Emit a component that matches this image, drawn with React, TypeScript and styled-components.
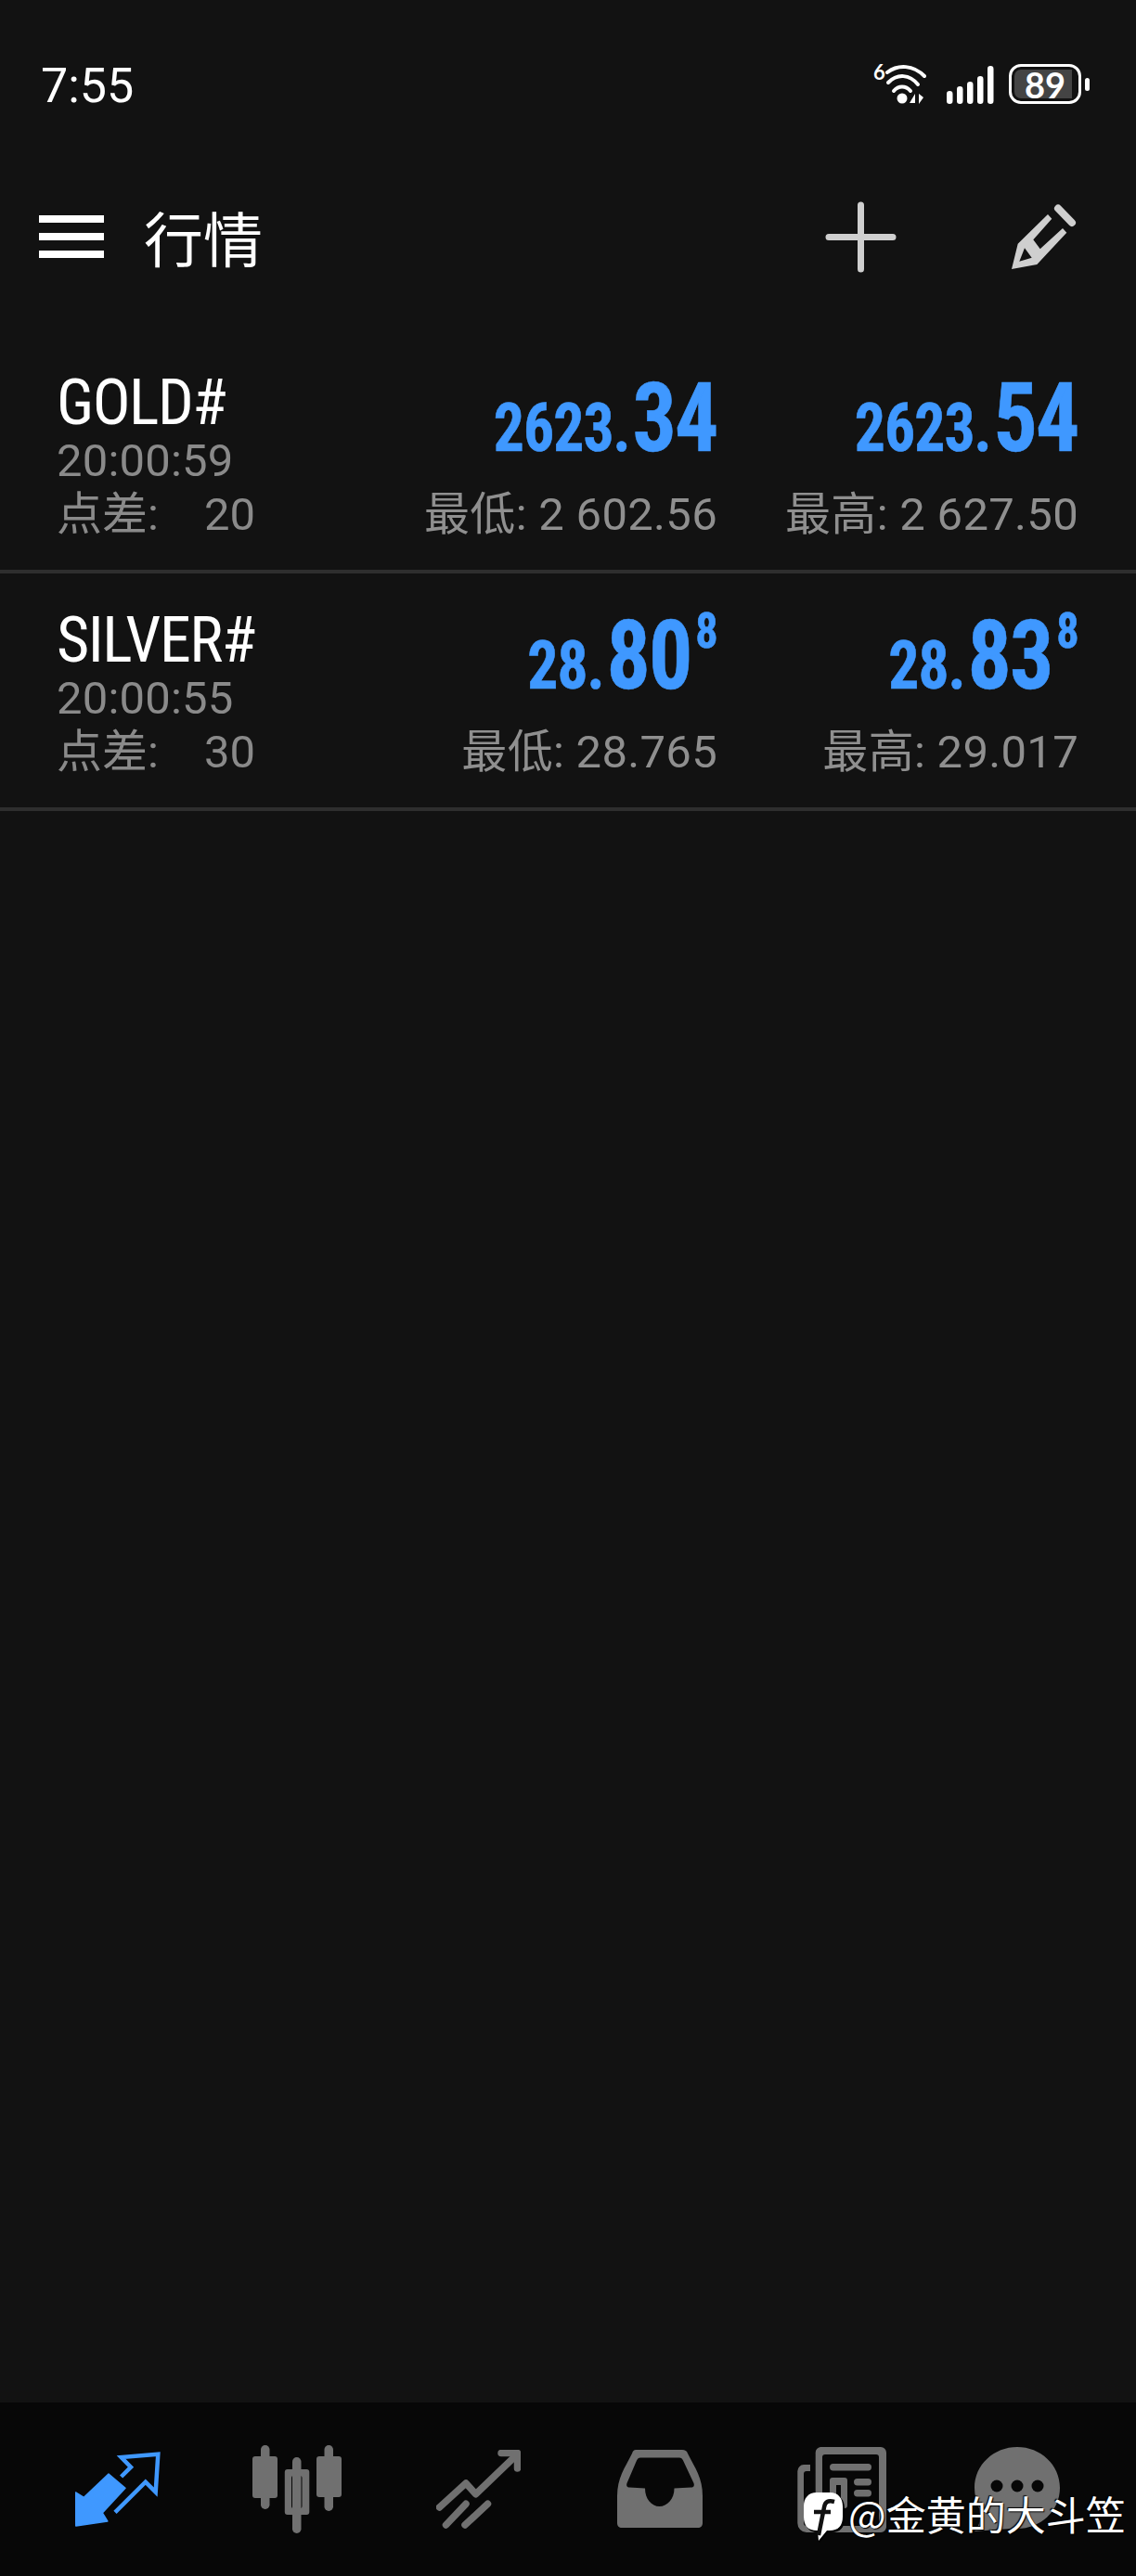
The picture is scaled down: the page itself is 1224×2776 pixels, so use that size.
import styled, { createGlobalStyle } from "styled-components";

type QuoteType = {
  head: string
  big: string
  sup?: string
  label: string
  value: string
}

type SymbolType = {
  name: string
  time: string
  spread: string
  bid: QuoteType
  ask: QuoteType
}

const symbols: SymbolType[] = [
  {
    name: "GOLD#",
    time: "20:00:59",
    spread: "20",
    bid: { head: "2623.", big: "34", label: "最低", value: "2 602.56" },
    ask: { head: "2623.", big: "54", label: "最高", value: "2 627.50" },
  },
  {
    name: "SILVER#",
    time: "20:00:55",
    spread: "30",
    bid: { head: "28.", big: "80", sup: "8", label: "最低", value: "28.765" },
    ask: { head: "28.", big: "83", sup: "8", label: "最高", value: "29.017" },
  },
]

const GlobalStyle = createGlobalStyle`
  html, body {
    margin: 0;
    padding: 0;
    background: #121212;
  }
`

const Page = styled.div`
  position: relative;
  display: flex;
  flex-direction: column;
  width: 1224px;
  height: 2776px;
  overflow: hidden;
  background: #121212;
  color: #fff;
  font-family: Roboto, "Noto Sans CJK SC", sans-serif;
`

const StatusBar = styled.div`
  display: flex;
  justify-content: space-between;
  height: 170px;
  box-sizing: border-box;
  padding: 61px 59px 0 44px;
`

const Clock = styled.span`
  font-size: 52px;
  line-height: 64px;
`

const StatusIcons = styled.div`
  display: flex;
  align-items: flex-start;
  height: 46px;
  margin-top: 8px;
`

const WifiSix = styled.span`
  width: 13px;
  margin-top: -2px;
  font-family: Lato, sans-serif;
  font-size: 22px;
  font-weight: 700;
  line-height: 22px;
`

const WifiIcon = styled.svg`
  display: block;
  margin-top: 1px;
`

const SignalIcon = styled.svg`
  display: block;
  margin-left: 22px;
  margin-top: 2px;
`

const Battery = styled.div`
  position: relative;
  display: flex;
  width: 78px;
  height: 43px;
  margin-left: 16px;
  box-sizing: border-box;
  border: 3px solid #fff;
  border-radius: 13px;
  padding: 3px;
  &::after {
    content: "";
    position: absolute;
    left: 79px;
    top: 12px;
    width: 5px;
    height: 14px;
    border-radius: 3px;
    background: #fff;
  }
`

const BatteryFill = styled.div`
  display: flex;
  align-items: center;
  justify-content: center;
  width: 62px;
  padding-left: 4px;
  box-sizing: border-box;
  border-radius: 7px 0 0 7px;
  background: #444;
  font-family: Lato, sans-serif;
  font-size: 38px;
  font-weight: 700;
  line-height: 32px;
`

const Toolbar = styled.div`
  display: flex;
  align-items: center;
  height: 170px;
  padding: 0 64px 0 42px;
`

const Burger = styled.div`
  display: flex;
  flex-direction: column;
  gap: 11px;
  width: 70px;
  span {
    height: 8px;
    background: #fff;
  }
`

const Title = styled.div`
  flex: 1;
  margin-left: 43px;
  margin-top: -3px;
  font-family: "Noto Sans CJK SC", sans-serif;
  font-size: 64px;
  line-height: 76px;
`

const ToolIcon = styled.svg<{ $before?: number; $after?: number }>`
  display: block;
  margin-left: ${(p) => p.$before || 0}px;
  margin-right: ${(p) => p.$after || 0}px;
`

const List = styled.div`
  padding-top: 22px;
`

const Row = styled.div`
  display: grid;
  grid-template-columns: 1fr 389px 389px;
  height: 252px;
  padding: 0 62px 0 61px;
  border-bottom: 4px solid #2e2e2e;
`

const Info = styled.div`
  display: flex;
  flex-direction: column;
  padding-top: 40px;
`

const SymbolName = styled.span`
  font-size: 68px;
  font-stretch: 75%;
  letter-spacing: -1.5px;
  line-height: 64px;
`

const Muted = styled.span`
  color: #8a8a8a;
  font-size: 49px;
`

const Time = styled(Muted)`
  letter-spacing: 0.2px;
  line-height: 62px;
`

const Spread = styled(Muted)`
  display: flex;
  justify-content: space-between;
  width: 214px;
  line-height: 53px;
`

const Quote = styled.div`
  display: flex;
  flex-direction: column;
  align-items: flex-end;
  padding-top: 40px;
`

const Price = styled.div`
  color: #3f98ff;
  font-size: 72px;
  font-stretch: 75%;
  font-weight: 700;
  letter-spacing: -1px;
  line-height: 119px;
  white-space: nowrap;
  -webkit-text-stroke: 0.6px #3f98ff;
  transform: scaleX(0.91);
  transform-origin: right center;
`

const PriceBig = styled.span`
  font-size: 103px;
  letter-spacing: -2px;
  line-height: 0;
  margin-left: 3px;
`

const PriceSup = styled.span`
  font-size: 53px;
  line-height: 0;
  margin-left: 5px;
  vertical-align: 44px;
`

const Range = styled.span`
  color: #8f8f8f;
  font-size: 49px;
  letter-spacing: 0.3px;
  line-height: 67px;
  white-space: nowrap;
`

const Spacer = styled.div`
  flex: 1;
`

const BottomNav = styled.div`
  display: flex;
  align-items: center;
  height: 187px;
  padding-left: 81px;
  background: #070707;
`

const NavIcon = styled.svg<{ $before?: number }>`
  display: block;
  flex: none;
  margin-left: ${(p) => p.$before || 0}px;
`

const Watermark = styled.div`
  position: absolute;
  left: 866px;
  top: 2682px;
  display: flex;
  align-items: flex-start;
  font-family: "Noto Sans CJK SC", sans-serif;
  font-size: 43px;
  line-height: 52px;
  text-shadow: 1px 1px 1px #000, -1px -1px 1px #000;
  white-space: nowrap;
`

const WatermarkLogo = styled.svg`
  display: block;
  margin-top: 4px;
`

const WatermarkText = styled.span`
  margin-left: 4px;
`

function QuoteCell({ quote }: { quote: QuoteType }) {
  return (
    <Quote>
      <Price>
        {quote.head}
        <PriceBig>{quote.big}</PriceBig>
        {quote.sup && <PriceSup>{quote.sup}</PriceSup>}
      </Price>
      <Range>{quote.label}: {quote.value}</Range>
    </Quote>
  )
}

export default function App() {
  return (
    <Page>
      <GlobalStyle />
      <StatusBar>
        <Clock>7:55</Clock>
        <StatusIcons>
          <WifiSix>6</WifiSix>
          <WifiIcon width="44" height="44" viewBox="0 0 44 44" fill="none" stroke="#fff" strokeLinecap="round" strokeWidth="4">
            <path d="M2 8 C14 -1 30 0 42 12" />
            <path d="M3 19 C13 9 26 10 35 21" />
            <path d="M9 28 C14 22 22 22 27 28" />
            <circle cx="18" cy="36" r="5.5" fill="#fff" stroke="none" />
            <path d="M32 31 L26 41 L32 41 Z M36 31 L36 42 L41 35 Z" fill="#fff" stroke="none" />
          </WifiIcon>
          <SignalIcon width="51" height="41" viewBox="0 0 51 41" fill="#fff">
            <rect x="0" y="27" width="6.5" height="14" rx="3.2" />
            <rect x="11" y="22" width="6.5" height="19" rx="3.2" />
            <rect x="22" y="17" width="6.5" height="24" rx="3.2" />
            <rect x="33" y="11" width="6.5" height="30" rx="3.2" />
            <rect x="44" y="0" width="6.5" height="41" rx="3.2" />
          </SignalIcon>
          <Battery>
            <BatteryFill>89</BatteryFill>
          </Battery>
        </StatusIcons>
      </StatusBar>

      <Toolbar>
        <Burger>
          <span />
          <span />
          <span />
        </Burger>
        <Title>行情</Title>
        <ToolIcon width="77" height="77" viewBox="0 0 77 77" fill="none" stroke="#cfcfcf" strokeWidth="7" strokeLinecap="round">
          <path d="M38.5 4 V73 M4 38.5 H73" />
        </ToolIcon>
        <ToolIcon $before={114} $after={-10} width="90" height="90" viewBox="0 0 90 90">
          <path
            fill="#cfcfcf"
            fillRule="evenodd"
            d="M49 21 L53.3 25.7 L33.3 48.3 L40.7 58.3 L65 36 L69.3 40.7 L37.3 75 L10 80 L16.7 52.7 Z M24 57.3 L31.7 67.7 L18.3 71.7 Z"
          />
          <path d="M60 14.5 L75 30" stroke="#cfcfcf" strokeWidth="8" strokeLinecap="round" fill="none" />
        </ToolIcon>
      </Toolbar>

      <List>
        {symbols.map((e) => (
          <Row key={e.name}>
            <Info>
              <SymbolName>{e.name}</SymbolName>
              <Time>{e.time}</Time>
              <Spread>
                <span>点差:</span>
                <span>{e.spread}</span>
              </Spread>
            </Info>
            <QuoteCell quote={e.bid} />
            <QuoteCell quote={e.ask} />
          </Row>
        ))}
      </List>

      <Spacer />

      <BottomNav>
        <NavIcon width="92" height="81" viewBox="0 0 92 81">
          <path fill="#3f98ff" strokeLinejoin="round" stroke="#3f98ff" strokeWidth="1.5" d="M0.5 44 L9.4 49.3 L36 24 L54 39.3 L29.3 66 L34.8 75 L0.8 80 Z" />
          <path fill="none" stroke="#3f98ff" strokeWidth="4.5" d="M43 65.3 L75.8 32.7 L86.7 43.7 L89.3 2.7 L49.6 6 L60 16.7 L49.6 27" />
        </NavIcon>
        <NavIcon $before={99} width="97" height="95" viewBox="0 0 97 95" fill="#707070">
          <rect x="9" y="0" width="9.5" height="69" rx="4.7" />
          <rect x="0" y="12" width="27" height="45" rx="3" />
          <rect x="43" y="13" width="9.5" height="82" rx="4.7" />
          <path fillRule="evenodd" d="M37.8 26 H58.3 A3 3 0 0 1 61.3 29 V72 A3 3 0 0 1 58.3 75 H37.8 A3 3 0 0 1 34.8 72 V29 A3 3 0 0 1 37.8 26 Z M44 33 A2 2 0 0 0 42 35 V66 A2 2 0 0 0 44 68 H51.5 A2 2 0 0 0 53.5 66 V35 A2 2 0 0 0 51.5 33 Z" />
          <rect x="77.5" y="0" width="9.5" height="71" rx="4.7" />
          <rect x="69" y="12" width="27" height="44" rx="3" />
        </NavIcon>
        <NavIcon $before={101} width="91" height="85" viewBox="0 0 91 85" fill="none" stroke="#707070" strokeWidth="7.5" strokeLinecap="round" strokeLinejoin="round">
          <path d="M3.5 62 L32 36 L42.6 47.7 L85 7" />
          <path d="M70 3.5 H87.5 V20" />
          <path d="M32 58.3 L10.5 81 M55.5 58.3 L31 81" />
        </NavIcon>
        <NavIcon $before={104} width="92" height="85" viewBox="0 0 92 85">
          <path
            fill="#707070"
            fillRule="evenodd"
            d="M20 0 H70 C73 0 75 1 76 4 C84 20 92 30 92 50 V79 C92 82 90 84 87 84 H5 C2 84 0 82 0 79 V50 C0 30 8 20 16 4 C17 1 18 0 20 0 Z M25 8.5 C23 8.5 22 9.5 21 11.5 L10.5 36 C9.5 39 11 40.5 13 40.5 L30 41.5 C30 53 37 61 45.5 61 C54 61 61.5 53 61.5 41.5 L80 40.5 C82 40.5 83.5 39 82.5 36 L71 11.5 C70 9.5 69 8.5 67 8.5 Z"
          />
        </NavIcon>
        <NavIcon $before={102} width="96" height="92" viewBox="0 0 96 92" fill="#707070">
          <path fillRule="evenodd" d="M25 0 H90 A6 6 0 0 1 96 6 V86 A6 6 0 0 1 90 92 H10 A10 10 0 0 1 0.3 82 V26 A7 7 0 0 1 7 19 H14 V26 H10 A3 3 0 0 0 7 29 V82 A3 3 0 0 0 10 85 H17 A2 2 0 0 0 19.7 83 V6 A6 6 0 0 1 25 0 Z M30 8 A3 3 0 0 0 27 11 V82 A3 3 0 0 0 30 85 H85 A3 3 0 0 0 88 82 V11 A3 3 0 0 0 85 8 Z" />
          <rect x="35" y="18" width="45" height="7.5" rx="3.7" />
          <path fillRule="evenodd" d="M38 33 H51 A3 3 0 0 1 54 36 V63 A3 3 0 0 1 51 66 H38 A3 3 0 0 1 35 63 V36 A3 3 0 0 1 38 33 Z M42 41 V58 H47 V41 Z" />
          <rect x="61" y="34" width="19" height="7.5" rx="3.7" />
          <rect x="61" y="46" width="19" height="7.5" rx="3.7" />
        </NavIcon>
        <NavIcon $before={95} width="92" height="92" viewBox="0 0 92 92">
          <path fill="#707070" d="M46 0 C71 0 92 19 92 44 C92 69 71 88 46 88 C32 88 22 89 0 91 C6 84 7 78 5 66 C2 59 0 52 0 44 C0 19 21 0 46 0 Z" />
          <circle cx="24" cy="42" r="6.5" fill="#070707" />
          <circle cx="46" cy="42" r="6.5" fill="#070707" />
          <circle cx="68" cy="42" r="6.5" fill="#070707" />
        </NavIcon>
      </BottomNav>

      <Watermark>
        <WatermarkLogo width="44" height="54" viewBox="0 0 44 54">
          <path fill="#000" d="M16 2 H30 C39 2 44 8 44 17 V28 C44 38 39 43 30 43 H26 L17 54 L16 43 H15 C6 43 2 38 2 28 V17 C2 8 7 2 16 2 Z" />
          <path fill="#fff" d="M14 0 H28 C37 0 42 6 42 15 V26 C42 36 37 41 28 41 H25 L16 52 L15 41 H14 C5 41 0 36 0 26 V15 C0 6 5 0 14 0 Z" />
          <path fill="none" stroke="#111" strokeWidth="4.5" d="M33 10 C26 8 23 10 22 16 L16 46 M11 21 H29" />
        </WatermarkLogo>
        <WatermarkText>@金黄的大斗笠</WatermarkText>
      </Watermark>
    </Page>
  )
}
